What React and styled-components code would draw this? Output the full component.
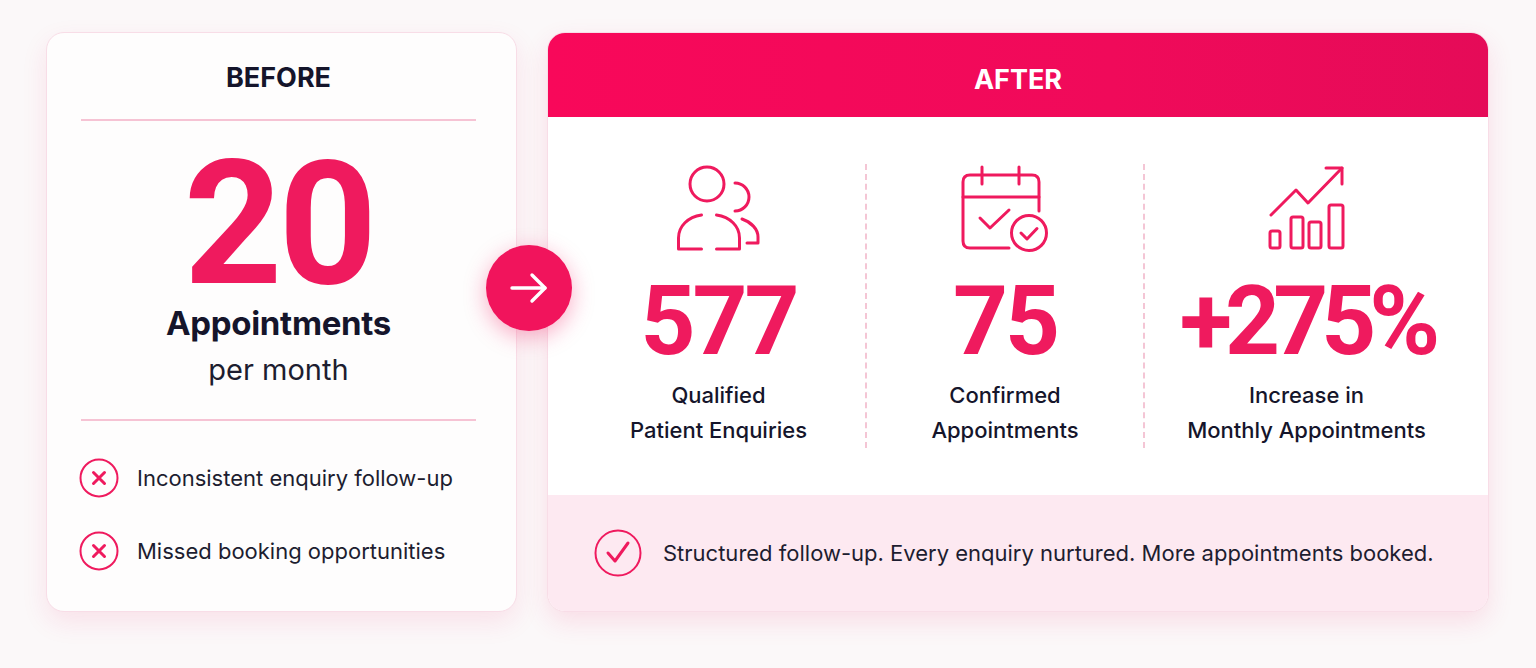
import React from 'react'
import styled, { createGlobalStyle } from 'styled-components'

const GlobalStyle = createGlobalStyle`
  * { box-sizing: border-box; }
  body {
    margin: 0;
    background: #fbf8f9;
    font-family: "Inter", "Roboto", "Liberation Sans", sans-serif;
    color: #15152b;
  }
`

const PINK = '#ef1a5e'

const UsersIcon = () => (
  <svg width="84" height="88" viewBox="0 0 84 88" fill="none" stroke={PINK} strokeWidth="3" strokeLinecap="round" strokeLinejoin="round">
    <circle cx="30" cy="20" r="17" />
    <path d="M24.5 51 C 11 53, 1.5 62, 1.5 74 V 85 H 24.5" />
    <path d="M39.5 51 C 53 53, 62.5 62, 62.5 74 V 85 H 39.5" />
    <path d="M58 19 A 14 14 0 0 1 58 47" />
    <path d="M65 55 C 74 58, 81 65, 81 73 V 79 H 70" />
  </svg>
)

const CalendarIcon = () => (
  <svg width="90" height="90" viewBox="0 0 90 90" fill="none" stroke={PINK} strokeWidth="3" strokeLinecap="round" strokeLinejoin="round">
    <path d="M79 48 V 19 Q 79 12 72 12 H 10 Q 3 12 3 19 V 78 Q 3 85 10 85 H 49" />
    <path d="M3 34 H 79" />
    <path d="M22 4 V 21" />
    <path d="M59 4 V 21" />
    <path d="M20 55 L 30 65 L 49 47" />
    <circle cx="69" cy="70" r="17.5" />
    <path d="M61 70 L 67 76 L 77 65.5" />
  </svg>
)

const ChartIcon = () => (
  <svg width="82" height="90" viewBox="0 0 82 90" fill="none" stroke={PINK} strokeWidth="3" strokeLinecap="round" strokeLinejoin="round">
    <rect x="4" y="68" width="10" height="17" rx="2" />
    <rect x="25" y="54" width="12" height="31" rx="2" />
    <rect x="43" y="59" width="12" height="26" rx="2" />
    <rect x="63" y="42" width="14" height="43" rx="2" />
    <path d="M5 52 L 30 27 L 42 40 L 76 5" />
    <path d="M60 5 H 76 V 21" />
  </svg>
)

const CrossIcon = () => (
  <svg width="40" height="40" viewBox="0 0 40 40" fill="none" stroke={PINK} strokeLinecap="round">
    <circle cx="20" cy="20" r="18.5" strokeWidth="2" />
    <path d="M14.5 14.5 L 25.5 25.5 M25.5 14.5 L 14.5 25.5" strokeWidth="3" />
  </svg>
)

const CheckCircle = () => (
  <svg width="48" height="48" viewBox="0 0 48 48" fill="none" stroke={PINK} strokeLinecap="round" strokeLinejoin="round">
    <circle cx="24" cy="24" r="22.5" strokeWidth="2" />
    <path d="M14 24 L 21 32 L 34 14" strokeWidth="3" />
  </svg>
)

const ArrowIcon = () => (
  <svg width="40" height="32" viewBox="0 0 40 32" fill="none" stroke="#ffffff" strokeWidth="3.4" strokeLinecap="round" strokeLinejoin="round">
    <path d="M3 16 H 36" />
    <path d="M23 3 L 36 16 L 23 29" />
  </svg>
)

const stats = [
  { icon: <UsersIcon />, value: '577', spacing: -3, label: ['Qualified', 'Patient Enquiries'] },
  { icon: <CalendarIcon />, value: '75', spacing: -3, label: ['Confirmed', 'Appointments'] },
  { icon: <ChartIcon />, value: '+275%', spacing: -7, label: ['Increase in', 'Monthly Appointments'] },
]

const App = () => {
  return (
    <>
      <GlobalStyle />
      <Page>
        <Row>
          <BeforeCard>
            <CardTitle>BEFORE</CardTitle>
            <Divider />
            <BigNumber>20</BigNumber>
            <Unit>Appointments</Unit>
            <Period>per month</Period>
            <Divider $gap={37} />
            <IssueList>
              <Issue><CrossIcon /><span>Inconsistent enquiry follow-up</span></Issue>
              <Issue><CrossIcon /><span>Missed booking opportunities</span></Issue>
            </IssueList>
          </BeforeCard>

          <ArrowBadge><ArrowIcon /></ArrowBadge>

          <AfterCard>
            <AfterHeader>AFTER</AfterHeader>
            <StatsGrid>
              {stats.map((s, i) => (
                <StatCol key={s.value} $divided={i > 0}>
                  <IconBox>{s.icon}</IconBox>
                  <StatValue $spacing={s.spacing}>{s.value}</StatValue>
                  <StatLabel>{s.label[0]}<br />{s.label[1]}</StatLabel>
                </StatCol>
              ))}
            </StatsGrid>
            <Summary>
              <CheckCircle />
              <SummaryText>Structured follow-up. Every enquiry nurtured. More appointments booked.</SummaryText>
            </Summary>
          </AfterCard>
        </Row>
      </Page>
    </>
  )
}

export default App

const Page = styled.div`
  width: 1536px;
  height: 668px;
  padding: 32px 47px 0 46px;
`

const Row = styled.div`
  position: relative;
  display: flex;
  gap: 30px;
  height: 580px;
`

const BeforeCard = styled.div`
  width: 471px;
  height: 100%;
  background: #fefdfd;
  border: 1px solid #f8dde7;
  border-radius: 18px;
  box-shadow: 0 10px 26px rgba(240, 30, 100, 0.10);
  padding: 29px 40px 0 34px;
  display: flex;
  flex-direction: column;
  align-items: center;
`

const CardTitle = styled.div`
  font-size: 27px;
  line-height: 32px;
  font-weight: 700;
  color: #15152b;
  margin-bottom: 25px;
`

const Divider = styled.div`
  width: 100%;
  height: 2px;
  background: #f6c3d4;
  flex-shrink: 0;
  margin-bottom: ${p => p.$gap || 0}px;
`

const BigNumber = styled.div`
  margin-top: 38px;
  font-family: "Roboto", "Liberation Sans", sans-serif;
  font-size: 172px;
  line-height: 130px;
  font-weight: 700;
  letter-spacing: -4px;
  color: ${PINK};
`

const Unit = styled.div`
  margin-top: 14px;
  font-size: 33px;
  line-height: 40px;
  font-weight: 700;
  letter-spacing: -0.3px;
  color: #15152b;
`

const Period = styled.div`
  margin-top: 9px;
  margin-bottom: 31px;
  font-size: 29px;
  line-height: 36px;
  font-weight: 400;
  color: #1d1d30;
`

const IssueList = styled.div`
  width: 100%;
  display: flex;
  flex-direction: column;
  gap: 33px;
`

const Issue = styled.div`
  display: flex;
  align-items: center;
  gap: 18px;
  margin-left: -2px;
  font-size: 22px;
  color: #1d1d30;
`

const ArrowBadge = styled.div`
  position: absolute;
  left: 440px;
  top: 213px;
  width: 86px;
  height: 86px;
  border-radius: 50%;
  background: #f1145c;
  box-shadow: 0 6px 22px rgba(240, 20, 92, 0.35);
  display: flex;
  align-items: center;
  justify-content: center;
  z-index: 2;
`

const AfterCard = styled.div`
  width: 942px;
  height: 100%;
  background: #ffffff;
  border: 1px solid #f8dde7;
  border-radius: 18px;
  overflow: hidden;
  box-shadow: 0 10px 26px rgba(240, 30, 100, 0.12);
  display: flex;
  flex-direction: column;
`

const AfterHeader = styled.div`
  height: 84px;
  flex-shrink: 0;
  background: linear-gradient(90deg, #f8085a 0%, #f00a5a 60%, #e50b58 100%);
  color: #ffffff;
  font-size: 27px;
  font-weight: 700;
  display: flex;
  align-items: center;
  justify-content: center;
  padding-top: 8px;
`

const StatsGrid = styled.div`
  display: grid;
  grid-template-columns: 293px 278px 1fr;
  padding: 47px 20px 47px 24px;
`

const StatCol = styled.div`
  display: flex;
  flex-direction: column;
  align-items: center;
  border-left: ${p => (p.$divided ? '2px dashed #f4c6d5' : 'none')};
`

const IconBox = styled.div`
  height: 88px;
  display: flex;
  align-items: center;
  justify-content: center;
`

const StatValue = styled.div`
  margin-top: 19px;
  font-family: "Roboto", "Liberation Sans", sans-serif;
  font-size: 96px;
  line-height: 100px;
  font-weight: 700;
  letter-spacing: ${p => p.$spacing}px;
  color: ${PINK};
`

const StatLabel = styled.div`
  margin-top: 7px;
  font-size: 22px;
  line-height: 35px;
  font-weight: 500;
  text-align: center;
  color: #15152b;
`

const Summary = styled.div`
  flex: 1;
  background: #fde9f1;
  display: flex;
  align-items: center;
  gap: 21px;
  padding: 0 0 0 46px;
`

const SummaryText = styled.span`
  font-size: 22px;
  color: #1d1d30;
`
